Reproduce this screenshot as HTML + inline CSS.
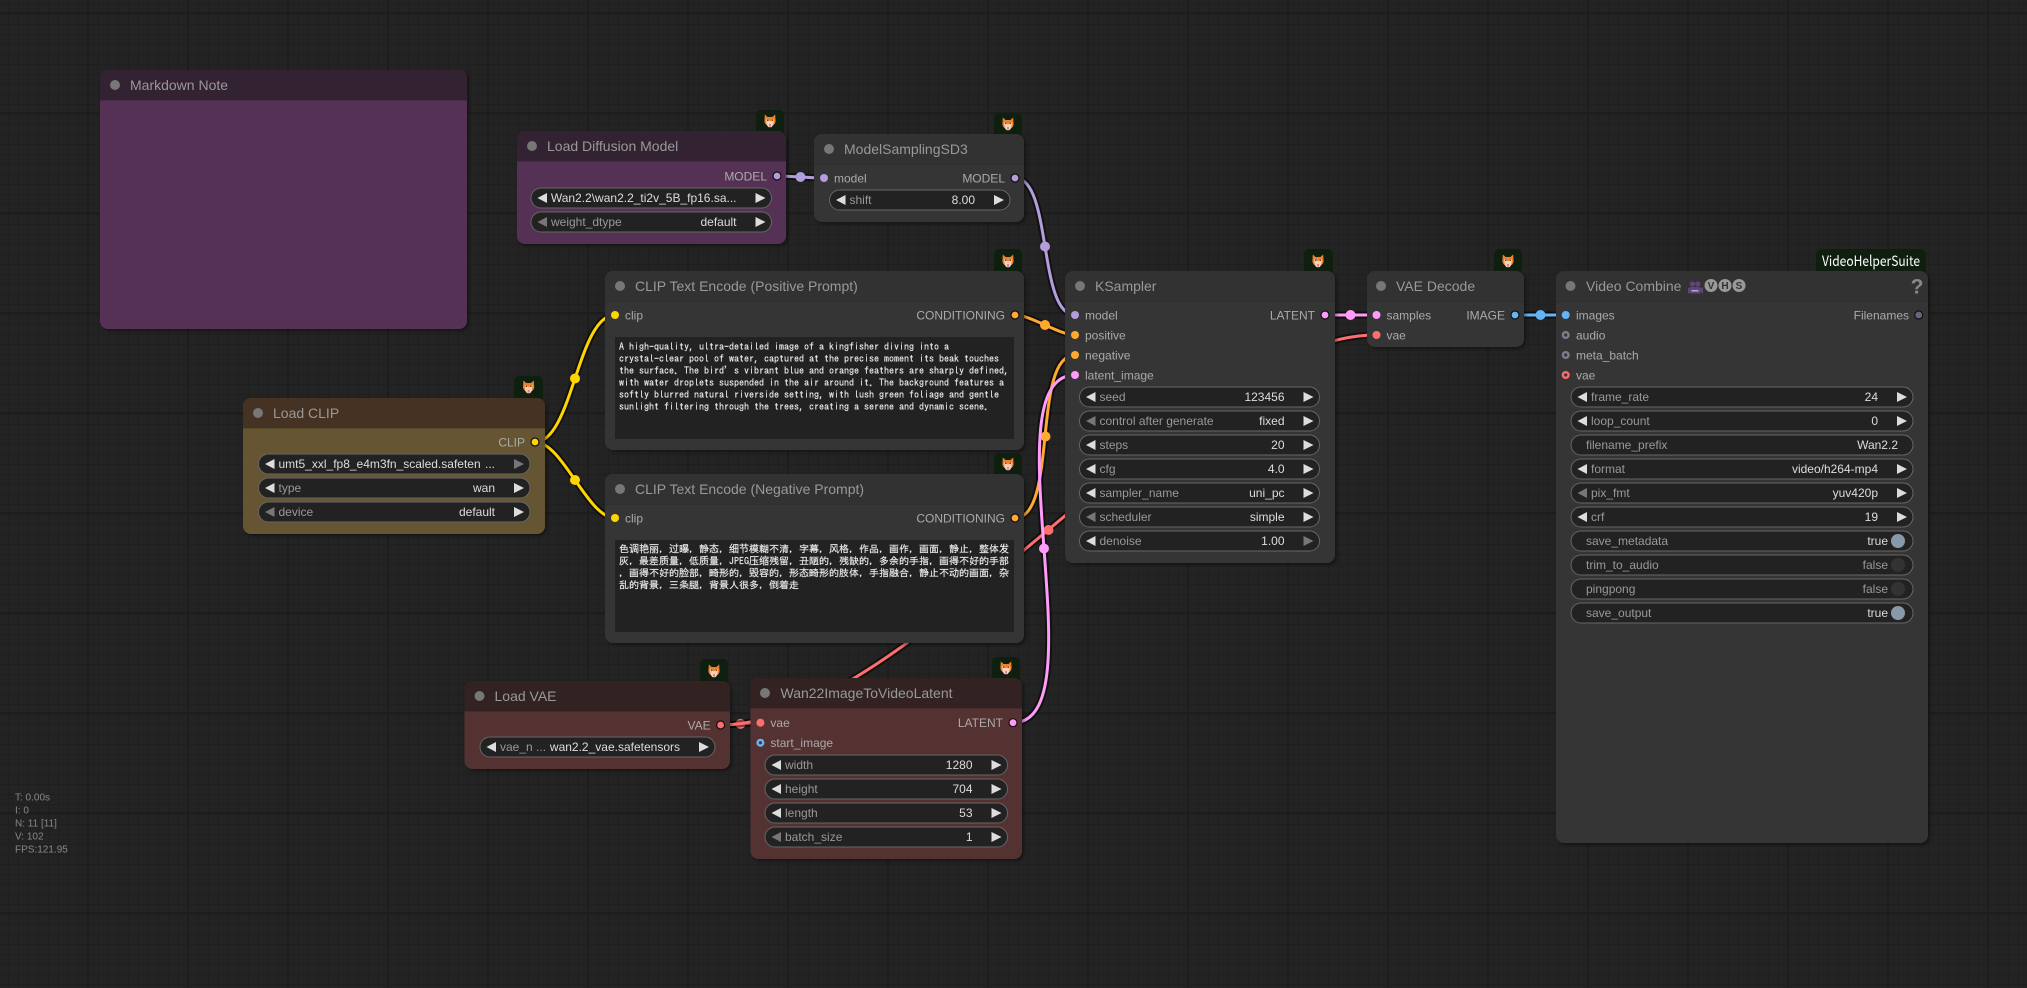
<!DOCTYPE html>
<html lang="en">
<head>
<meta charset="utf-8">
<title>ComfyUI workflow</title>
<style>
html,body{margin:0;padding:0;width:2027px;height:988px;overflow:hidden;background-color:#232323;}
body{
background-image:
linear-gradient(90deg,#1d1d1d 2px,transparent 2px),
linear-gradient(0deg,#1d1d1d 2px,transparent 2px),
linear-gradient(90deg,#1f1f1f 1px,transparent 1px),
linear-gradient(0deg,#1f1f1f 1px,transparent 1px);
background-size:100px 100px,100px 100px,10px 10px,10px 10px;
background-position:87px 0,0 14px,8px 0,0 5px;
}
svg{position:absolute;left:0;top:0;display:block}
text{font-family:"Liberation Sans",Arial,sans-serif;font-size:12px}
.t{font-size:14px;fill:#999}
.s{fill:#aaa}
.e{fill:#aaa;text-anchor:end}
.n{fill:#999}
.v{fill:#ddd;text-anchor:end}
.f{fill:#999;text-anchor:end}
.w{fill:#222;stroke:#666;stroke-width:1}
.on{fill:#ddd}
.off{fill:#777}
.m{font-family:"IPAGothic","WenQuanYi Zen Hei Mono","Noto Sans CJK SC",monospace;font-size:10px;fill:#eee;stroke:#ddd;stroke-width:.2}
.d{fill:#777}
.stat{font-size:10px;fill:#888}
.bdg{fill:#0f1f0f}
.bl{fill:none;stroke:#000;stroke-opacity:.5;stroke-width:7}
.lk{fill:none;stroke-width:3}
.o{stroke:#111;stroke-width:1.2}
</style>
</head>
<body>
<svg width="2027" height="988" viewBox="0 0 2027 988" xmlns="http://www.w3.org/2000/svg">
<defs>
<filter id="sh" x="-5%" y="-5%" width="110%" height="110%"><feDropShadow dx="2" dy="2" stdDeviation="1.5" flood-color="#000" flood-opacity=".4"/></filter>
<path id="al" d="M16 5L6.5 10L16 15Z"/>
<path id="ar" d="M-16 5L-6 10L-16 15Z"/>
<g id="fox">
<path d="M-5.2-6.5L-2.4-4H2.4L5.2-6.5L5.6 0.5Q5 3.5 2.4 4.5H-2.4Q-5 3.5-5.6 0.5Z" fill="#f0812c"/>
<path d="M-4-1.8Q-1.6-1.5 0 0.5Q1.6-1.5 4-1.8L3.2 4L1.8 6Q0 6.6-1.8 6L-3.2 4Z" fill="#f6d2bd"/>
<rect x="-3" y="-1.4" width="1.4" height="1.4" fill="#7a3c18"/>
<rect x="1.6" y="-1.4" width="1.4" height="1.4" fill="#7a3c18"/>
<rect x="-1" y="3" width="2" height="2.6" fill="#e2808c"/>
</g>
</defs>

<!-- links -->
<g>
<path class="bl" d="M777 176C788.8 176 812.2 178 824 178"/>
<path class="bl" d="M1015 178C1052.4 178 1037.6 315 1075 315"/>
<path class="bl" d="M535 442C572.5 442 577.5 315 615 315"/>
<path class="bl" d="M535 442C562.6 442 587.4 518 615 518"/>
<path class="bl" d="M1015 315C1030.8 315 1059.2 335 1075 335"/>
<path class="bl" d="M1015 518C1058.4 518 1031.6 355 1075 355"/>
<path class="bl" d="M720.6 725C730.6 725 750.4 722.7 760.4 722.7"/>
<path class="bl" d="M1013 722.7C1101 722.7 987 375 1075 375"/>
<path class="bl" d="M1325 315H1376"/>
<path class="bl" d="M1515 315H1566"/>

<path class="lk" stroke="#b39ddb" d="M777 176C788.8 176 812.2 178 824 178"/>
<circle cx="800.5" cy="177" r="5" fill="#b39ddb"/>
<path class="lk" stroke="#b39ddb" d="M1015 178C1052.4 178 1037.6 315 1075 315"/>
<circle cx="1045" cy="246.5" r="5" fill="#b39ddb"/>
<path class="lk" stroke="#ffd500" d="M535 442C572.5 442 577.5 315 615 315"/>
<circle cx="575" cy="378.5" r="5" fill="#ffd500"/>
<path class="lk" stroke="#ffd500" d="M535 442C562.6 442 587.4 518 615 518"/>
<circle cx="575" cy="480" r="5" fill="#ffd500"/>
<path class="lk" stroke="#ffa931" d="M1015 315C1030.8 315 1059.2 335 1075 335"/>
<circle cx="1045" cy="325" r="5" fill="#ffa931"/>
<path class="lk" stroke="#ffa931" d="M1015 518C1058.4 518 1031.6 355 1075 355"/>
<circle cx="1045.5" cy="436.5" r="5" fill="#ffa931"/>
<path class="lk" stroke="#ff6e6e" d="M720.6 725C730.6 725 750.4 722.7 760.4 722.7"/>
<circle cx="740.5" cy="723.9" r="5" fill="#ff6e6e"/>
<path class="bl" d="M720.6 725C911 725 1185 335 1376 335"/>
<path class="lk" stroke="#ff6e6e" d="M720.6 725C911 725 1185 335 1376 335"/>
<circle cx="1048.5" cy="530" r="5" fill="#ff6e6e"/>
<path class="lk" stroke="#ff9cf9" d="M1013 722.7C1101 722.7 987 375 1075 375"/>
<circle cx="1044" cy="548.5" r="5" fill="#ff9cf9"/>
<path class="lk" stroke="#ff9cf9" d="M1325 315H1376"/>
<circle cx="1350.5" cy="315" r="5" fill="#ff9cf9"/>
<path class="lk" stroke="#64b5f6" d="M1515 315H1566"/>
<circle cx="1540.5" cy="315" r="5" fill="#64b5f6"/>
</g>

<!-- Markdown Note -->
<g filter="url(#sh)">
<rect x="100" y="70" width="367" height="259" rx="8" fill="#553355"/>
<path d="M100 100V78a8 8 0 0 1 8-8H459a8 8 0 0 1 8 8V100Z" fill="#332233"/>
<rect x="100" y="100" width="367" height="1" fill="#000" opacity=".12"/>
</g>
<circle class="d" cx="115" cy="85" r="5"/>
<text class="t" x="130" y="90">Markdown Note</text>

<!-- Load Diffusion Model -->
<rect class="bdg" x="756" y="110" width="28" height="26" rx="5"/>
<use href="#fox" x="770" y="121"/>
<g filter="url(#sh)">
<rect x="517" y="131" width="269" height="113" rx="8" fill="#553355"/>
<path d="M517 161V139a8 8 0 0 1 8-8H778a8 8 0 0 1 8 8V161Z" fill="#332233"/>
<rect x="517" y="161" width="269" height="1" fill="#000" opacity=".12"/>
</g>
<circle class="d" cx="532" cy="146" r="5"/>
<text class="t" x="547" y="151">Load Diffusion Model</text>
<text class="e" x="767" y="180.5">MODEL</text>
<circle class="o" cx="777" cy="176" r="4" fill="#b39ddb"/>
<g transform="translate(531,188)"><rect class="w" width="240.5" height="20" rx="10"/><use href="#al" class="on"/><use href="#ar" x="240.5" class="on"/><text class="v" x="205.5" y="14">Wan2.2\wan2.2_ti2v_5B_fp16.sa...</text></g>
<g transform="translate(531,212)"><rect class="w" width="240.5" height="20" rx="10"/><use href="#al" class="off"/><use href="#ar" x="240.5" class="on"/><text class="n" x="20" y="14">weight_dtype</text><text class="v" x="205.5" y="14">default</text></g>

<!-- ModelSamplingSD3 -->
<rect class="bdg" x="994" y="113" width="28" height="26" rx="5"/>
<use href="#fox" x="1008" y="124"/>
<g filter="url(#sh)">
<rect x="814" y="134" width="210" height="88" rx="8" fill="#353535"/>
<path d="M814 164V142a8 8 0 0 1 8-8H1016a8 8 0 0 1 8 8V164Z" fill="#333"/>
<rect x="814" y="164" width="210" height="1" fill="#000" opacity=".12"/>
</g>
<circle class="d" cx="829" cy="149" r="5"/>
<text class="t" x="844" y="154">ModelSamplingSD3</text>
<circle cx="824" cy="178" r="4" fill="#b39ddb"/>
<text class="s" x="834" y="182.5">model</text>
<text class="e" x="1005" y="182.5">MODEL</text>
<circle class="o" cx="1015" cy="178" r="4" fill="#b39ddb"/>
<g transform="translate(829.5,190)"><rect class="w" width="180.5" height="20" rx="10"/><use href="#al" class="on"/><use href="#ar" x="180.5" class="on"/><text class="n" x="20" y="14">shift</text><text class="v" x="145.5" y="14">8.00</text></g>

<!-- Load CLIP -->
<rect class="bdg" x="514" y="376" width="29" height="26" rx="5"/>
<use href="#fox" x="528.6" y="387"/>
<g filter="url(#sh)">
<rect x="243" y="398" width="302" height="136" rx="8" fill="#665533"/>
<path d="M243 428V406a8 8 0 0 1 8-8H537a8 8 0 0 1 8 8V428Z" fill="#443322"/>
<rect x="243" y="428" width="302" height="1" fill="#000" opacity=".12"/>
</g>
<circle class="d" cx="258" cy="413" r="5"/>
<text class="t" x="273" y="418">Load CLIP</text>
<text class="e" x="525" y="446.5">CLIP</text>
<circle class="o" cx="535" cy="442" r="4" fill="#ffd500"/>
<g transform="translate(258.5,454)"><rect class="w" width="271.5" height="20" rx="10"/><use href="#al" class="on"/><use href="#ar" x="271.5" class="off"/><text x="20" y="14" fill="#ddd">umt5_xxl_fp8_e4m3fn_scaled.safeten</text><text class="v" x="236.5" y="14">...</text></g>
<g transform="translate(258.5,478)"><rect class="w" width="271.5" height="20" rx="10"/><use href="#al" class="on"/><use href="#ar" x="271.5" class="on"/><text class="n" x="20" y="14">type</text><text class="v" x="236.5" y="14">wan</text></g>
<g transform="translate(258.5,502)"><rect class="w" width="271.5" height="20" rx="10"/><use href="#al" class="off"/><use href="#ar" x="271.5" class="on"/><text class="n" x="20" y="14">device</text><text class="v" x="236.5" y="14">default</text></g>

<!-- CLIP Positive -->
<rect class="bdg" x="994" y="249" width="28" height="26" rx="5"/>
<use href="#fox" x="1008" y="261"/>
<g filter="url(#sh)">
<rect x="605" y="271" width="419" height="179" rx="8" fill="#353535"/>
<path d="M605 301V279a8 8 0 0 1 8-8H1016a8 8 0 0 1 8 8V301Z" fill="#333"/>
<rect x="605" y="301" width="419" height="1" fill="#000" opacity=".12"/>
</g>
<circle class="d" cx="620" cy="286" r="5"/>
<text class="t" x="635" y="291">CLIP Text Encode (Positive Prompt)</text>
<circle cx="615" cy="315" r="4" fill="#ffd500"/>
<text class="s" x="625" y="319.5">clip</text>
<text class="e" x="1005" y="319.5">CONDITIONING</text>
<circle class="o" cx="1015" cy="315" r="4" fill="#ffa931"/>
<rect x="615" y="337" width="399" height="102" fill="#222"/>
<g>
<text class="m" x="619" y="350">A high-quality, ultra-detailed image of a kingfisher diving into a</text>
<text class="m" x="619" y="362">crystal-clear pool of water, captured at the precise moment its beak touches</text>
<text class="m" x="619" y="374">the surface. The bird’<tspan dx="-5"> s vibrant blue and orange feathers are sharply defined,</tspan></text>
<text class="m" x="619" y="386">with water droplets suspended in the air around it. The background features a</text>
<text class="m" x="619" y="398">softly blurred natural riverside setting, with lush green foliage and gentle</text>
<text class="m" x="619" y="410">sunlight filtering through the trees, creating a serene and dynamic scene.</text>
</g>

<!-- CLIP Negative -->
<rect class="bdg" x="994" y="453" width="28" height="26" rx="5"/>
<use href="#fox" x="1008" y="464"/>
<g filter="url(#sh)">
<rect x="605" y="474" width="419" height="169" rx="8" fill="#353535"/>
<path d="M605 504V482a8 8 0 0 1 8-8H1016a8 8 0 0 1 8 8V504Z" fill="#333"/>
<rect x="605" y="504" width="419" height="1" fill="#000" opacity=".12"/>
</g>
<circle class="d" cx="620" cy="489" r="5"/>
<text class="t" x="635" y="494">CLIP Text Encode (Negative Prompt)</text>
<circle cx="615" cy="518" r="4" fill="#ffd500"/>
<text class="s" x="625" y="522.5">clip</text>
<text class="e" x="1005" y="522.5">CONDITIONING</text>
<circle class="o" cx="1015" cy="518" r="4" fill="#ffa931"/>
<rect x="615" y="540" width="399" height="92" fill="#222"/>
<g>
<text class="m" x="619" y="552.5">色调艳丽，过曝，静态，细节模糊不清，字幕，风格，作品，画作，画面，静止，整体发</text>
<text class="m" x="619" y="564.5">灰，最差质量，低质量，JPEG压缩残留，丑陋的，残缺的，多余的手指，画得不好的手部</text>
<text class="m" x="619" y="576.5">，画得不好的脸部，畸形的，毁容的，形态畸形的肢体，手指融合，静止不动的画面，杂</text>
<text class="m" x="619" y="588.5">乱的背景，三条腿，背景人很多，倒着走</text>
</g>

<!-- KSampler -->
<rect class="bdg" x="1304" y="249" width="29" height="26" rx="5"/>
<use href="#fox" x="1318" y="261"/>
<g filter="url(#sh)">
<rect x="1065" y="271" width="270" height="292" rx="8" fill="#353535"/>
<path d="M1065 301V279a8 8 0 0 1 8-8H1327a8 8 0 0 1 8 8V301Z" fill="#333"/>
<rect x="1065" y="301" width="270" height="1" fill="#000" opacity=".12"/>
</g>
<circle class="d" cx="1080" cy="286" r="5"/>
<text class="t" x="1095" y="291">KSampler</text>
<circle cx="1075" cy="315" r="4" fill="#b39ddb"/><text class="s" x="1085" y="319.5">model</text>
<circle cx="1075" cy="335" r="4" fill="#ffa931"/><text class="s" x="1085" y="339.5">positive</text>
<circle cx="1075" cy="355" r="4" fill="#ffa931"/><text class="s" x="1085" y="359.5">negative</text>
<circle cx="1075" cy="375" r="4" fill="#ff9cf9"/><text class="s" x="1085" y="379.5">latent_image</text>
<text class="e" x="1315" y="319.5">LATENT</text>
<circle class="o" cx="1325" cy="315" r="4" fill="#ff9cf9"/>
<g transform="translate(1079.5,387)"><rect class="w" width="240" height="20" rx="10"/><use href="#al" class="on"/><use href="#ar" x="240" class="on"/><text class="n" x="20" y="14">seed</text><text class="v" x="205" y="14">123456</text></g>
<g transform="translate(1079.5,411)"><rect class="w" width="240" height="20" rx="10"/><use href="#al" class="off"/><use href="#ar" x="240" class="on"/><text class="n" x="20" y="14">control after generate</text><text class="v" x="205" y="14">fixed</text></g>
<g transform="translate(1079.5,435)"><rect class="w" width="240" height="20" rx="10"/><use href="#al" class="on"/><use href="#ar" x="240" class="on"/><text class="n" x="20" y="14">steps</text><text class="v" x="205" y="14">20</text></g>
<g transform="translate(1079.5,459)"><rect class="w" width="240" height="20" rx="10"/><use href="#al" class="on"/><use href="#ar" x="240" class="on"/><text class="n" x="20" y="14">cfg</text><text class="v" x="205" y="14">4.0</text></g>
<g transform="translate(1079.5,483)"><rect class="w" width="240" height="20" rx="10"/><use href="#al" class="on"/><use href="#ar" x="240" class="on"/><text class="n" x="20" y="14">sampler_name</text><text class="v" x="205" y="14">uni_pc</text></g>
<g transform="translate(1079.5,507)"><rect class="w" width="240" height="20" rx="10"/><use href="#al" class="off"/><use href="#ar" x="240" class="on"/><text class="n" x="20" y="14">scheduler</text><text class="v" x="205" y="14">simple</text></g>
<g transform="translate(1079.5,531)"><rect class="w" width="240" height="20" rx="10"/><use href="#al" class="on"/><use href="#ar" x="240" class="off"/><text class="n" x="20" y="14">denoise</text><text class="v" x="205" y="14">1.00</text></g>

<!-- VAE Decode -->
<rect class="bdg" x="1494" y="249" width="28" height="26" rx="5"/>
<use href="#fox" x="1508" y="261"/>
<g filter="url(#sh)">
<rect x="1367" y="271" width="157" height="76" rx="8" fill="#353535"/>
<path d="M1367 301V279a8 8 0 0 1 8-8H1516a8 8 0 0 1 8 8V301Z" fill="#333"/>
<rect x="1367" y="301" width="157" height="1" fill="#000" opacity=".12"/>
</g>
<circle class="d" cx="1381" cy="286" r="5"/>
<text class="t" x="1396" y="291">VAE Decode</text>
<circle cx="1376.5" cy="315" r="4" fill="#ff9cf9"/><text class="s" x="1386.5" y="319.5">samples</text>
<circle cx="1376.5" cy="335" r="4" fill="#ff6e6e"/><text class="s" x="1386.5" y="339.5">vae</text>
<text class="e" x="1505" y="319.5">IMAGE</text>
<circle class="o" cx="1515" cy="315" r="4" fill="#64b5f6"/>

<!-- Video Combine -->
<rect class="bdg" x="1816" y="249" width="110" height="28" rx="6"/>
<text x="1822" y="266" font-size="14" textLength="98" lengthAdjust="spacingAndGlyphs" fill="#fff" style="font-family:'Noto Sans CJK SC','Liberation Sans',sans-serif;font-size:14px">VideoHelperSuite</text>
<g filter="url(#sh)">
<rect x="1556" y="271" width="372" height="572" rx="8" fill="#353535"/>
<path d="M1556 301V279a8 8 0 0 1 8-8H1920a8 8 0 0 1 8 8V301Z" fill="#333"/>
<rect x="1556" y="301" width="372" height="1" fill="#000" opacity=".12"/>
</g>
<circle class="d" cx="1570.5" cy="286" r="5"/>
<text class="t" x="1586" y="291">Video Combine</text>
<!-- camera icon -->
<g fill="#5e4478">
<circle cx="1692.5" cy="284" r="2.6"/><circle cx="1697.8" cy="284" r="2.6"/>
<rect x="1689.5" y="287" width="11" height="6.5" rx="1"/>
<path d="M1700.5 288.5L1703 287V293.5L1700.5 292Z"/><path d="M1689.5 288.5L1688 287.5V293.5L1689.5 292.5Z"/>
</g>
<rect x="1691.5" y="290" width="7" height="1.5" fill="#b9a8c9"/>
<g>
<circle cx="1711" cy="285.5" r="6.5" fill="#999"/><text x="1711" y="289" text-anchor="middle" fill="#333" style="font-size:10px;font-weight:bold">V</text>
<circle cx="1725" cy="285.5" r="6.5" fill="#999"/><text x="1725" y="289" text-anchor="middle" fill="#333" style="font-size:10px;font-weight:bold">H</text>
<circle cx="1739" cy="285.5" r="6.5" fill="#999"/><text x="1739" y="289" text-anchor="middle" fill="#333" style="font-size:10px;font-weight:bold">S</text>
</g>
<text x="1917" y="293.5" text-anchor="middle" fill="#888" style="font-size:21px;font-weight:bold">?</text>
<circle cx="1565.7" cy="315" r="4" fill="#64b5f6"/><text class="s" x="1576" y="319.5">images</text>
<circle cx="1565.7" cy="335" r="4" fill="#7d7d92"/><circle cx="1565.7" cy="335" r="1.6" fill="#353535"/><text class="s" x="1576" y="339.5">audio</text>
<circle cx="1565.7" cy="355" r="4" fill="#7d7d92"/><circle cx="1565.7" cy="355" r="1.6" fill="#353535"/><text class="s" x="1576" y="359.5">meta_batch</text>
<circle cx="1565.7" cy="375" r="4" fill="#ff6e6e"/><circle cx="1565.7" cy="375" r="1.6" fill="#353535"/><text class="s" x="1576" y="379.5">vae</text>
<text class="e" x="1909" y="319.5">Filenames</text>
<circle class="o" cx="1918.7" cy="315" r="4" fill="#666680"/>
<g transform="translate(1571,387)"><rect class="w" width="342" height="20" rx="10"/><use href="#al" class="on"/><use href="#ar" x="342" class="on"/><text class="n" x="20" y="14">frame_rate</text><text class="v" x="307" y="14">24</text></g>
<g transform="translate(1571,411)"><rect class="w" width="342" height="20" rx="10"/><use href="#al" class="on"/><use href="#ar" x="342" class="on"/><text class="n" x="20" y="14">loop_count</text><text class="v" x="307" y="14">0</text></g>
<g transform="translate(1571,435)"><rect class="w" width="342" height="20" rx="10"/><text class="n" x="15" y="14">filename_prefix</text><text class="v" x="327" y="14">Wan2.2</text></g>
<g transform="translate(1571,459)"><rect class="w" width="342" height="20" rx="10"/><use href="#al" class="on"/><use href="#ar" x="342" class="on"/><text class="n" x="20" y="14">format</text><text class="v" x="307" y="14">video/h264-mp4</text></g>
<g transform="translate(1571,483)"><rect class="w" width="342" height="20" rx="10"/><use href="#al" class="off"/><use href="#ar" x="342" class="on"/><text class="n" x="20" y="14">pix_fmt</text><text class="v" x="307" y="14">yuv420p</text></g>
<g transform="translate(1571,507)"><rect class="w" width="342" height="20" rx="10"/><use href="#al" class="on"/><use href="#ar" x="342" class="on"/><text class="n" x="20" y="14">crf</text><text class="v" x="307" y="14">19</text></g>
<g transform="translate(1571,531)"><rect class="w" width="342" height="20" rx="10"/><text class="n" x="15" y="14">save_metadata</text><text class="v" x="317" y="14">true</text><circle cx="327" cy="10" r="7" fill="#89a"/></g>
<g transform="translate(1571,555)"><rect class="w" width="342" height="20" rx="10"/><text class="n" x="15" y="14">trim_to_audio</text><text class="f" x="317" y="14">false</text><circle cx="327" cy="10" r="7" fill="#333"/></g>
<g transform="translate(1571,579)"><rect class="w" width="342" height="20" rx="10"/><text class="n" x="15" y="14">pingpong</text><text class="f" x="317" y="14">false</text><circle cx="327" cy="10" r="7" fill="#333"/></g>
<g transform="translate(1571,603)"><rect class="w" width="342" height="20" rx="10"/><text class="n" x="15" y="14">save_output</text><text class="v" x="317" y="14">true</text><circle cx="327" cy="10" r="7" fill="#89a"/></g>

<!-- Load VAE -->
<rect class="bdg" x="700" y="659" width="28" height="26" rx="5"/>
<use href="#fox" x="714" y="671"/>
<g filter="url(#sh)">
<rect x="464.5" y="681" width="265.5" height="88" rx="8" fill="#553333"/>
<path d="M464.5 711V689a8 8 0 0 1 8-8H722a8 8 0 0 1 8 8V711Z" fill="#332222"/>
<rect x="464.5" y="711" width="265.5" height="1" fill="#000" opacity=".12"/>
</g>
<circle class="d" cx="479.5" cy="696" r="5"/>
<text class="t" x="494.5" y="701">Load VAE</text>
<text class="e" x="710.6" y="729.5">VAE</text>
<circle class="o" cx="720.6" cy="725" r="4" fill="#ff6e6e"/>
<g transform="translate(480,737)"><rect class="w" width="235" height="20" rx="10"/><use href="#al" class="on"/><use href="#ar" x="235" class="on"/><text class="n" x="20" y="14">vae_n ...</text><text class="v" x="200" y="14">wan2.2_vae.safetensors</text></g>

<!-- Wan22 -->
<rect class="bdg" x="992" y="657" width="28" height="26" rx="5"/>
<use href="#fox" x="1006" y="668"/>
<g filter="url(#sh)">
<rect x="750.5" y="678" width="271.5" height="181" rx="8" fill="#553333"/>
<path d="M750.5 708V686a8 8 0 0 1 8-8H1014a8 8 0 0 1 8 8V708Z" fill="#332222"/>
<rect x="750.5" y="708" width="271.5" height="1" fill="#000" opacity=".12"/>
</g>
<circle class="d" cx="765" cy="693" r="5"/>
<text class="t" x="780.5" y="698">Wan22ImageToVideoLatent</text>
<circle cx="760.4" cy="722.7" r="4" fill="#ff6e6e"/><text class="s" x="770.4" y="727">vae</text>
<circle cx="760.4" cy="742.7" r="4" fill="#64b5f6"/><circle cx="760.4" cy="742.7" r="1.6" fill="#553333"/><text class="s" x="770.4" y="747">start_image</text>
<text class="e" x="1003" y="727">LATENT</text>
<circle class="o" cx="1013" cy="722.7" r="4" fill="#ff9cf9"/>
<g transform="translate(765,755)"><rect class="w" width="242.5" height="20" rx="10"/><use href="#al" class="on"/><use href="#ar" x="242.5" class="on"/><text class="n" x="20" y="14">width</text><text class="v" x="207.5" y="14">1280</text></g>
<g transform="translate(765,779)"><rect class="w" width="242.5" height="20" rx="10"/><use href="#al" class="on"/><use href="#ar" x="242.5" class="on"/><text class="n" x="20" y="14">height</text><text class="v" x="207.5" y="14">704</text></g>
<g transform="translate(765,803)"><rect class="w" width="242.5" height="20" rx="10"/><use href="#al" class="on"/><use href="#ar" x="242.5" class="on"/><text class="n" x="20" y="14">length</text><text class="v" x="207.5" y="14">53</text></g>
<g transform="translate(765,827)"><rect class="w" width="242.5" height="20" rx="10"/><use href="#al" class="off"/><use href="#ar" x="242.5" class="on"/><text class="n" x="20" y="14">batch_size</text><text class="v" x="207.5" y="14">1</text></g>

<!-- stats -->
<text class="stat" x="15" y="800.5">T: 0.00s</text>
<text class="stat" x="15" y="813.5">I: 0</text>
<text class="stat" x="15" y="826.5">N: 11 [11]</text>
<text class="stat" x="15" y="839.5">V: 102</text>
<text class="stat" x="15" y="852.5">FPS:121.95</text>
</svg>
</body>
</html>
